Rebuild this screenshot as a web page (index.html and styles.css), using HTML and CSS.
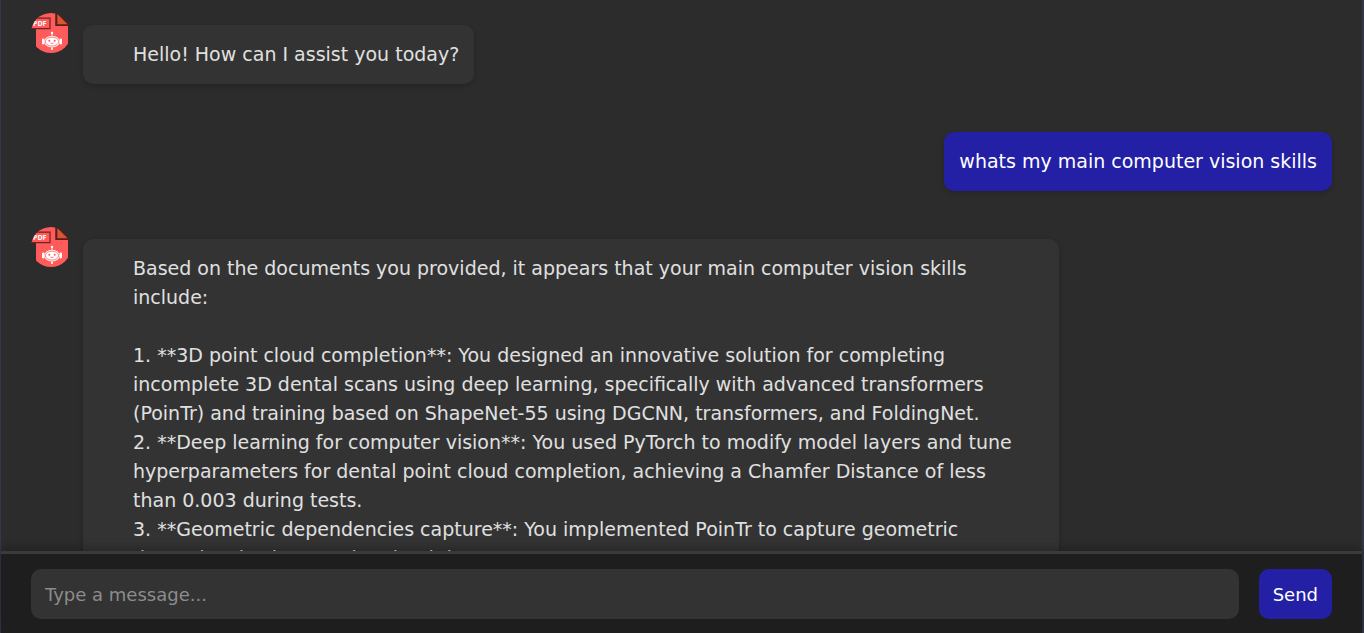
FILE: index.html
```html
<!DOCTYPE html>
<html lang="en">
<head>
<meta charset="utf-8">
<meta name="viewport" content="width=device-width, initial-scale=1">
<title>Chat</title>
<link rel="stylesheet" href="styles.css">
</head>
<body>
<svg class="sprite" aria-hidden="true">
  <symbol id="bot" viewBox="0 0 40 40">
    <clipPath id="round"><circle cx="20" cy="20" r="20"/></clipPath>
    <g clip-path="url(#round)">
      <path fill="#ff5b5b" d="M5 0h19.500v13H37v27H5z"/>
      <path fill="#591c20" d="M24.500 0h3L38 10.500V13H24.500z"/>
      <path fill="#d9562f" d="M26.300 1L36.500 11.300H26.300z"/>
      <path fill="#ff5b5b" stroke="#6e2229" stroke-width="1.200" d="M2 5.200h17v10.400H-2z"/>
      <text x="2" y="13" class="pdf">PDF</text>
      <g fill="#fff">
        <circle cx="21" cy="20" r="1.200"/>
        <path d="M20.600 20h.8v4h-.8zM20.600 33h.8v3h-.8z"/>
        <circle cx="21" cy="36" r="1"/>
        <rect x="11" y="25.500" width="2.500" height="6" rx="1.200"/>
        <rect x="28.500" y="25.500" width="2.500" height="6" rx="1.200"/>
        <ellipse cx="21" cy="28.600" rx="7.800" ry="5.800"/>
      </g>
      <ellipse cx="21" cy="28.600" rx="6.600" ry="4.500" fill="none" stroke="#ff5b5b" stroke-width=".8"/>
      <g fill="#ff5b5b"><circle cx="18.300" cy="27.700" r="1"/><circle cx="23.700" cy="27.700" r="1"/></g>
      <path d="M19.500 30q1.500 1.400 3 0" fill="none" stroke="#ff5b5b" stroke-width=".8"/>
    </g>
  </symbol>
</svg>
<div class="chat">
  <main class="messages">
    <article class="row">
      <svg class="avatar" role="img" aria-label="Assistant"><use href="#bot"/></svg>
      <p class="bubble bot">Hello! How can I assist you today?</p>
    </article>
    <article class="row own">
      <p class="bubble user">whats my main computer vision skills</p>
    </article>
    <article class="row">
      <svg class="avatar" role="img" aria-label="Assistant"><use href="#bot"/></svg>
      <p class="bubble bot">Based on the documents you provided, it appears that your main computer vision skills include:

1. **3D point cloud completion**: You designed an innovative solution for completing incomplete 3D dental scans using deep learning, specifically with advanced transformers (PoinTr) and training based on ShapeNet-55 using DGCNN, transformers, and FoldingNet.
2. **Deep learning for computer vision**: You used PyTorch to modify model layers and tune hyperparameters for dental point cloud completion, achieving a Chamfer Distance of less than&nbsp;0.003 during tests.
3. **Geometric dependencies capture**: You implemented PoinTr to capture geometric dependencies in 3D point cloud data.</p>
    </article>
  </main>
  <form class="composer">
    <input class="field" type="text" placeholder="Type a message..." aria-label="Message">
    <button class="send" type="button">Send</button>
  </form>
</div>
</body>
</html>
```
FILE: styles.css
```css
* { box-sizing: border-box; }
body {
  margin: 0;
  background: #2c2c2c;
  font-family: "DejaVu Sans", sans-serif;
}
.sprite { position: absolute; width: 0; height: 0; }
.pdf { font: bold 7px "Open Sans", sans-serif; fill: #fff; }
.chat {
  display: flex;
  flex-direction: column;
  height: 100vh;
  border-left: 1px solid #34364a;
  border-right: 2px solid #34364a;
}
.messages {
  flex: 1;
  min-height: 0;
  overflow: hidden;
  display: flex;
  flex-direction: column;
  gap: 48px;
  padding: 25px 30px 0;
}
.row {
  display: flex;
  flex-shrink: 0;
  align-items: flex-start;
  gap: 12px;
}
.own { justify-content: flex-end; }
.avatar {
  flex: none;
  width: 40px;
  height: 40px;
  margin-top: -12px;
}
.bubble {
  margin: 0;
  max-width: 75%;
  padding: 15px;
  border-radius: 10px;
  box-shadow: 0 2px 5px rgba(0, 0, 0, 0.2);
  font-size: 19px;
  line-height: 29px;
  white-space: pre-wrap;
}
.bot { padding-left: 50px; background: #333; color: #e0e0e0; }
.user { background: #2320a6; color: #fff; }
.composer {
  position: relative;
  display: flex;
  gap: 20px;
  padding: 15px 30px 14px;
  background: #1e1e1e;
  border-top: 3px solid #3a3a3a;
  box-shadow: 0 -2px 10px rgba(0, 0, 0, 0.3);
}
.field, .send {
  height: 50px;
  border: 0;
  border-radius: 10px;
  font-family: inherit;
  font-size: 18px;
}
.field {
  flex: 1;
  min-width: 0;
  padding: 0 14px;
  background: #333;
  color: #e0e0e0;
}
.field::placeholder { color: #8c8c8c; }
.send { padding: 0 14px; background: #2320a6; color: #fff; }
```
